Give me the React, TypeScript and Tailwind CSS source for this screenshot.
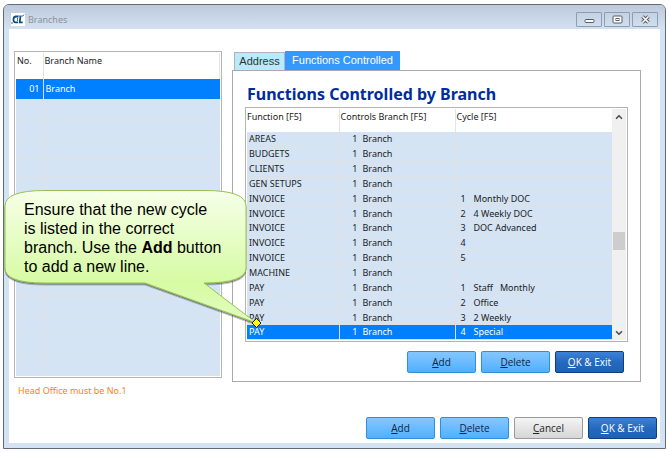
import { clsx } from 'clsx';
import { ChevronDown, ChevronUp } from 'lucide-react';

interface Row {
  fn: string;
  no?: string;
  cycle?: string;
}

const rows: Row[] = [
  { fn: 'AREAS' },
  { fn: 'BUDGETS' },
  { fn: 'CLIENTS' },
  { fn: 'GEN SETUPS' },
  { fn: 'INVOICE', no: '1', cycle: 'Monthly DOC' },
  { fn: 'INVOICE', no: '2', cycle: '4 Weekly DOC' },
  { fn: 'INVOICE', no: '3', cycle: 'DOC Advanced' },
  { fn: 'INVOICE', no: '4' },
  { fn: 'INVOICE', no: '5' },
  { fn: 'MACHINE' },
  { fn: 'PAY', no: '1', cycle: 'Staff   Monthly' },
  { fn: 'PAY', no: '2', cycle: 'Office' },
  { fn: 'PAY', no: '3', cycle: '2 Weekly' },
  { fn: 'PAY', no: '4', cycle: 'Special' },
];

const emptyRows = Array.from({ length: 14 }, (_, i) => i);

const variants = {
  light: 'border-[#2f8fd8] bg-linear-to-b from-[#84c6ff] to-[#4fb0ff] text-[#12253c]',
  dark: 'border-[#0d3f80] bg-linear-to-b from-[#3c82d6] via-[#2468bd] via-55% to-[#1b63b8] text-white',
  gray: 'border-[#9a9a9a] bg-linear-to-b from-[#f4f4f4] to-[#d6d6d6] text-[#222]',
};

function ActionButton({ label, variant }: { label: string; variant: keyof typeof variants }) {
  return (
    <button
      type="button"
      className={clsx(
        'h-[22px] w-[69px] rounded-[2px] border text-center font-["Open_Sans",sans-serif] text-[10px] leading-[18px] font-medium whitespace-nowrap',
        variants[variant],
      )}
    >
      <span className="underline underline-offset-1">{label[0]}</span>
      {label.slice(1)}
    </button>
  );
}

function TitleBar() {
  const button = 'flex h-[15px] w-[26px] items-center justify-center rounded-[1px] border border-[#8f9db3]';
  return (
    <header className="flex h-6 items-center justify-between bg-linear-to-b from-[#bccadb] to-[#d3e1f1] px-[7px] pt-[5px]">
      <div className="flex items-center gap-[3px]">
        <svg width="14" height="13" viewBox="0 0 14 13" aria-hidden="true">
          <rect width="14" height="13" fill="#fff" />
          <path d="M7.5 3.5H5Q2.800 3.500 2.500 6Q2.300 9.300 4.500 9.300H7" fill="none" stroke="#124a7c" strokeWidth="1.8" />
          <path d="M6.500 5v3" fill="none" stroke="#3c77a5" />
          <path d="M9.500 3l-.8 6.300h3" fill="none" stroke="#124a7c" strokeWidth="1.8" />
          <path d="M7.500 3h4.500l1-1.500M0 10h2" fill="none" stroke="#3c77a5" />
        </svg>
        <h1 className="text-[9px] text-[#8b939c]">Branches</h1>
      </div>
      <div className="flex gap-[2px]">
        <button type="button" aria-label="Minimize" className={button}>
          <svg width="11" height="9" viewBox="0 0 11 9">
            <rect x="1" y="4.5" width="9" height="3" rx="1" fill="#fff" stroke="#535c6c" />
          </svg>
        </button>
        <button type="button" aria-label="Maximize" className={button}>
          <svg width="11" height="9" viewBox="0 0 11 9">
            <rect x="1" y="1" width="9" height="7" rx="1" fill="#fff" stroke="#535c6c" />
            <rect x="4" y="3.5" width="3" height="2" fill="#fff" stroke="#535c6c" />
          </svg>
        </button>
        <button type="button" aria-label="Close" className={button}>
          <svg width="11" height="9" viewBox="0 0 11 9">
            <path d="M2.500 1.500l6 6M8.500 1.500l-6 6" stroke="#535c6c" strokeWidth="3.6" />
            <path d="M2.500 1.500l6 6M8.500 1.500l-6 6" stroke="#fff" strokeWidth="1.6" />
          </svg>
        </button>
      </div>
    </header>
  );
}

function BranchTable() {
  return (
    <div className="border border-[#b4b4b8] p-px">
      <table className="h-[323px] w-full table-fixed border-collapse text-[9px] leading-3">
        <thead>
          <tr className="h-[26px] text-left align-top">
            <th className="w-[27px] border-r border-[#e4e4e4] pt-[2px] pl-px font-normal">No.</th>
            <th className="border-r border-[#e4e4e4] pt-[2px] pl-px font-normal">Branch Name</th>
          </tr>
        </thead>
        <tbody>
          <tr className="h-[19px] bg-[#007fff] text-white">
            <td className="border-r border-[#dfe0e2] pr-[3px] text-right">01</td>
            <td className="pl-[2px]">Branch</td>
          </tr>
          {emptyRows.map((i) => (
            <tr key={i} className="h-[19px] bg-[#d4e4f4]">
              <td className="border-r border-b border-[#dfe0e2]" />
              <td className="border-b border-[#dfe0e2]" />
            </tr>
          ))}
        </tbody>
      </table>
    </div>
  );
}

function FunctionTable() {
  return (
    <div className="flex border border-[#b4b4b8] p-px">
      <table className="h-[231px] min-w-0 flex-1 table-fixed border-collapse text-[9px] leading-3">
        <thead>
          <tr className="h-[23px] text-left align-top">
            <th className="w-[92px] border-r border-[#e4e4e4] pt-[2px] font-normal">Function [F5]</th>
            <th className="w-[116px] border-r border-[#e4e4e4] pt-[2px] pl-px font-normal">Controls Branch [F5]</th>
            <th className="pt-[2px] pl-px font-normal">Cycle [F5]</th>
          </tr>
        </thead>
        <tbody>
          {rows.map((row, i) => {
            const selected = i === rows.length - 1;
            return (
              <tr key={i} className={selected ? 'bg-[#007fff] text-white' : 'bg-[#d4e4f4] text-[#222]'}>
                <td className="border-r border-b border-[#dfe0e2] pt-px pl-[2px]">{row.fn}</td>
                <td className="border-r border-b border-[#dfe0e2] pt-px">
                  <span className="inline-block w-[18px] text-right">1</span>
                  <span className="pl-[5px]">Branch</span>
                </td>
                <td className="border-b border-[#dfe0e2] pt-px whitespace-pre">
                  <span className="inline-block w-[18px] pl-[5px]">{row.no}</span>
                  <span>{row.cycle}</span>
                </td>
              </tr>
            );
          })}
        </tbody>
      </table>
      <div className="flex w-[14px] flex-col items-center bg-[#f0f0f0]">
        <button type="button" aria-label="Scroll up" className="flex h-4 items-center">
          <ChevronUp size={10} strokeWidth={4} className="text-[#505050]" />
        </button>
        <div className="flex-[107]" />
        <div className="h-[18px] w-3 bg-[#cdcdcd]" />
        <div className="flex-[76]" />
        <button type="button" aria-label="Scroll down" className="flex h-[14px] items-center">
          <ChevronDown size={10} strokeWidth={4} className="text-[#505050]" />
        </button>
      </div>
    </div>
  );
}

function Callout() {
  return (
    <div className="absolute top-[189px] left-1 h-[140px] w-[260px]">
      <svg className="absolute inset-0" width="260" height="140" viewBox="0 0 260 140" aria-hidden="true">
        <defs>
          <linearGradient id="bubble" x1="0" y1="0" x2="0" y2="1">
            <stop offset="0" stopColor="#f7ffe9" />
            <stop offset="0.7" stopColor="#d6fba3" />
            <stop offset="1" stopColor="#e2fdc0" />
          </linearGradient>
          <filter id="shade" x="-5%" y="-5%" width="110%" height="115%">
            <feDropShadow dx="0" dy="1.5" stdDeviation="0.7" floodColor="#333" floodOpacity="0.6" />
          </filter>
        </defs>
        <path
          d="M41 1.5H201Q242 1.500 242 17V79Q242 94 200 94L252.500 134L141 94H41Q1 94 1 79V17Q1 1.500 41 1.500Z"
          fill="url(#bubble)"
          stroke="#98c254"
          filter="url(#shade)"
        />
        <path d="M252.500 129.500l4.500 4.500l-4.500 4.500l-4.500-4.500Z" fill="#ff0" stroke="#222" />
      </svg>
      <p className="relative pt-[11px] pl-5 font-['Liberation_Sans',Arial,sans-serif] text-base leading-[19px] whitespace-nowrap text-black">
        Ensure that the new cycle
        <br />
        is listed in the correct
        <br />
        branch. Use the <strong>Add</strong> button
        <br />
        to add a new line.
      </p>
    </div>
  );
}

export default function App() {
  return (
    <div className="relative bg-white px-[3px] pt-1 pb-[3px] font-['Noto_Sans',sans-serif] text-[#222]">
      <div className="overflow-hidden rounded-t-md border border-[#666b73] bg-[#d4e3f3]">
        <TitleBar />
        <main className="mx-[5px] mb-[5px] bg-white">
          <div className="flex gap-[10px] pt-[22px] pr-[19px] pl-[5px]">
            <section className="w-[208px]">
              <BranchTable />
              <p className="pt-[7px] pl-1 text-[9px] leading-3 text-[#ff8214]">Head Office must be No.1</p>
            </section>
            <section className="min-w-0 flex-1">
              <div role="tablist" className="flex items-end pl-[2px] font-['Liberation_Sans',Arial,sans-serif] text-[11px]">
                <button
                  type="button"
                  role="tab"
                  aria-selected="false"
                  className="h-[18px] w-[51px] border border-b-0 border-[#b4b4b8] bg-[#b5ebfa] text-center text-[#333]"
                >
                  Address
                </button>
                <button
                  type="button"
                  role="tab"
                  aria-selected="true"
                  className="h-[19px] w-[115px] bg-[#3399ff] text-center text-white"
                >
                  Functions Controlled
                </button>
              </div>
              <div className="border border-[#a9a9ad] px-3 pt-3 pb-2">
                <h2 className="h-6 pl-[2px] text-base leading-[22px] font-bold whitespace-nowrap text-[#002d9c]">
                  Functions Controlled by Branch
                </h2>
                <FunctionTable />
                <div className="flex justify-end gap-[5px] pt-[9px] pr-[4px]">
                  <ActionButton label="Add" variant="light" />
                  <ActionButton label="Delete" variant="light" />
                  <ActionButton label="OK & Exit" variant="dark" />
                </div>
              </div>
            </section>
          </div>
          <div className="flex justify-end gap-[5px] pt-5 pr-[3px] pb-1">
            <ActionButton label="Add" variant="light" />
            <ActionButton label="Delete" variant="light" />
            <ActionButton label="Cancel" variant="gray" />
            <ActionButton label="OK & Exit" variant="dark" />
          </div>
        </main>
      </div>
      <Callout />
    </div>
  );
}
